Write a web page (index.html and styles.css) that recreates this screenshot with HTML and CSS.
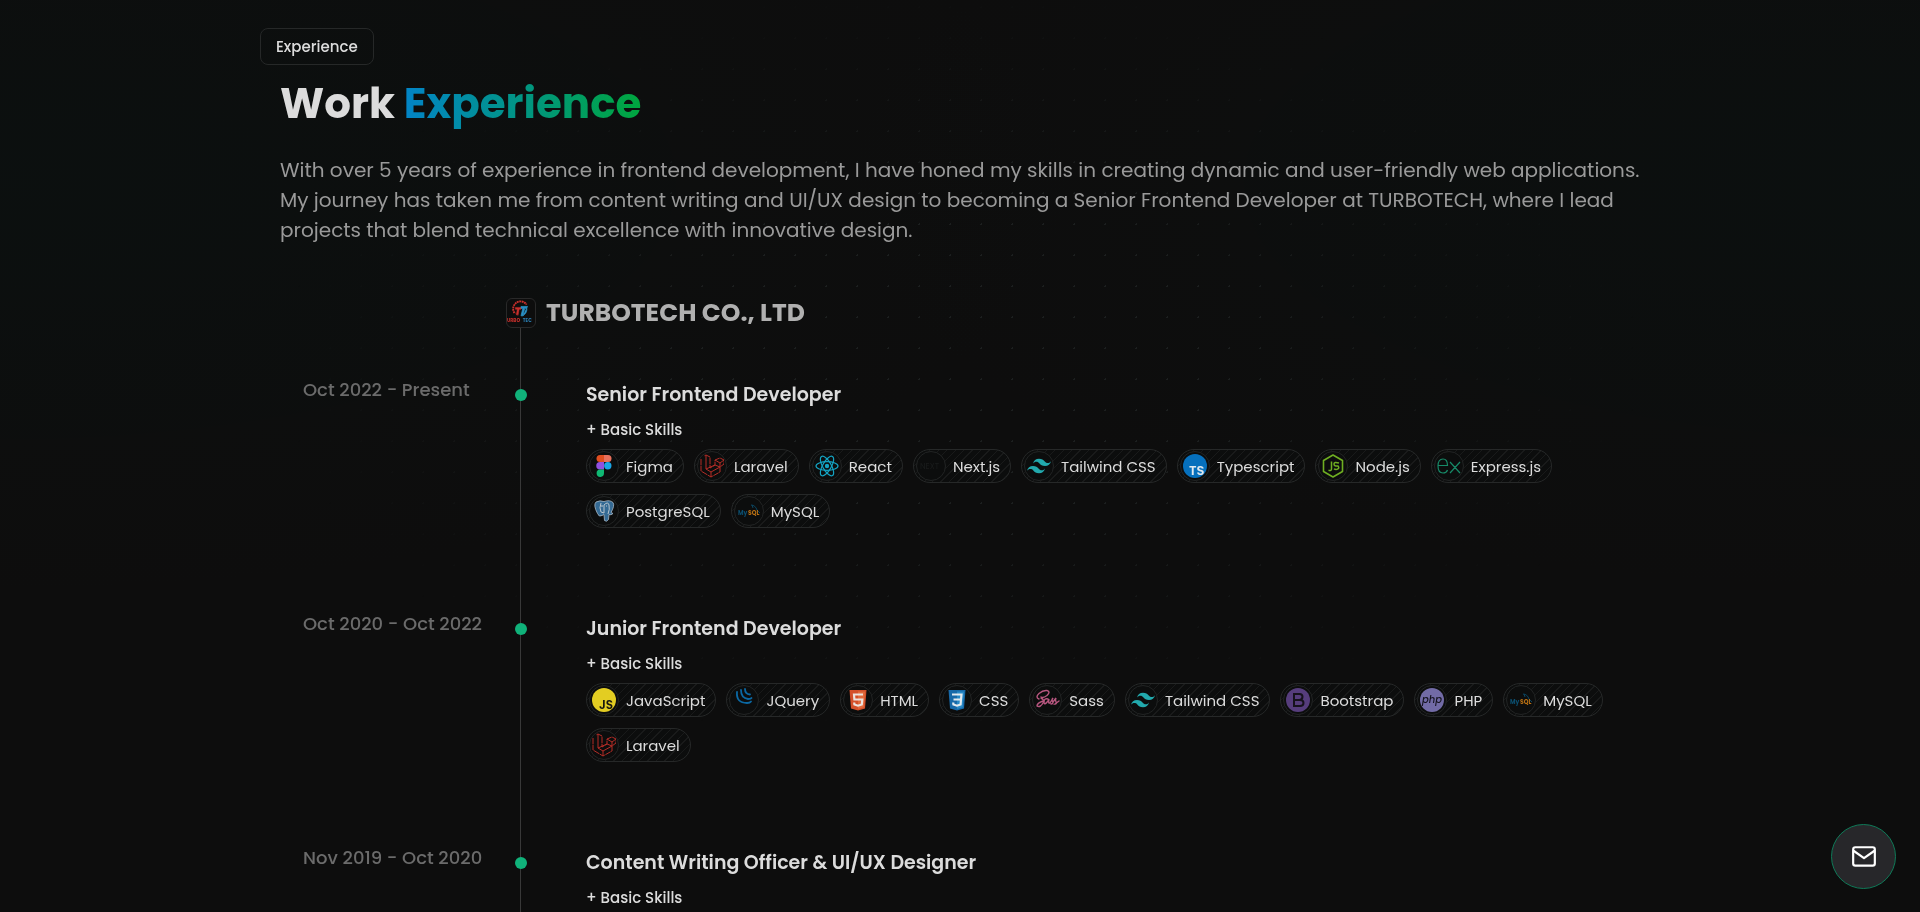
FILE: index.html
```
<!DOCTYPE html>
<html lang="en">

<head>
    <meta charset="UTF-8" />
    <meta name="viewport" content="width=device-width, initial-scale=1" />
    <title>Work Experience</title>
    <link rel="stylesheet" href="styles.css">
</head>

<body>
    <!-- Shared icons, used more than once -->
    <svg class="icon-sprite" aria-hidden="true">
        <symbol id="icon-laravel" viewBox="0 0 24 24">
            <g fill="none" stroke="#b52d27" stroke-width="1" stroke-linejoin="round">
                <path d="M1 5v12l10 6 9-5v-5l4-3V6l-4-2-5 2v5l-5 3V3L6 1 4 2" stroke-dasharray="6 .6" />
                <path d="M6 1v14l5 3 9-5M11 18v5M6 15l9-4 5 2M15 6l5 3 4-3M20 9v4" />
            </g>
        </symbol>
        <symbol id="icon-tailwind" viewBox="0 0 24 24">
            <path fill="#22a9ad" d="M12 4.800c-3.200 0-5.200 1.600-6 4.800 1.200-1.600 2.600-2.200 4.200-1.800.9.2 1.600.9 2.300 1.700C13.700 10.700 15 12 18 12c3.200 0 5.200-1.600 6-4.800-1.200 1.600-2.600 2.200-4.200 1.800-.9-.2-1.600-.9-2.300-1.700C16.300 6.100 15 4.800 12 4.800zM6 12c-3.200 0-5.200 1.600-6 4.800 1.200-1.600 2.600-2.200 4.200-1.800.9.2 1.600.9 2.300 1.700C7.700 17.900 9 19.200 12 19.200c3.200 0 5.200-1.600 6-4.800-1.200 1.600-2.600 2.200-4.200 1.800-.9-.2-1.600-.9-2.300-1.700C10.300 13.300 9 12 6 12z" />
        </symbol>
        <symbol id="icon-mysql" viewBox="0 0 24 24">
            <path d="M14 6c3 0 5 2 6 5l3 3M15 6l1 3" fill="none" stroke="#0b4560" stroke-width="1" />
            <text x="1" y="16" font-size="6" font-weight="700" fill="#0b4f70">My</text>
            <text x="11" y="16" font-size="6" font-weight="700" fill="#b87014">SQL</text>
        </symbol>
    </svg>

    <main class="experience">
        <span class="badge">Experience</span>
        <header class="intro">
            <h1 class="title">Work <span class="title-accent">Experience</span></h1>
            <p class="summary">With over 5 years of experience in frontend development, I have honed my skills in creating dynamic and user-friendly web applications. My journey has taken me from content writing and UI/UX design to becoming a Senior Frontend Developer at TURBOTECH, where I lead projects that blend technical excellence with innovative design.</p>
        </header>

        <section class="timeline">
            <div class="company">
                <svg class="company-logo" viewBox="0 0 30 30" role="img" aria-label="Turbotech">
                    <path d="M8 15a7 7 0 0 1 13-9" fill="none" stroke="#c9302c" stroke-width="2" stroke-dasharray="2 .6" />
                    <path d="M9 9h7l-1 2h-2l-1 6h-2l1-6H9zM8 14l4 4" fill="#c9302c" stroke="#c9302c" stroke-width=".5" />
                    <path d="M15 8h7l-1 2h-2l-2 8h-2l2-8h-2zM21 9c1 4-1 7-4 9" fill="#2a8fc4" stroke="#2a8fc4" stroke-width=".8" />
                    <text x="0" y="25" font-size="5" font-weight="700" fill="#c9302c">URBO</text>
                    <text x="17" y="25" font-size="5" font-weight="700" fill="#2a7fb4">TEC</text>
                </svg>
                <h2 class="company-name">TURBOTECH CO., LTD</h2>
            </div>

            <article class="job">
                <p class="job-date">Oct 2022 - Present</p>
                <span class="job-dot"></span>
                <div class="job-body">
                    <h3 class="job-title">Senior Frontend Developer</h3>
                    <p class="job-skills">+ Basic Skills</p>
                    <ul class="chips">
                        <li class="chip"><span class="chip-icon"><svg viewBox="0 0 24 24">
                                    <path d="M8 1h4v7H8a3.500 3.500 0 0 1 0-7z" fill="#e04e20" />
                                    <path d="M12 1h4a3.500 3.500 0 0 1 0 7h-4z" fill="#e8705c" />
                                    <path d="M8 8h4v7.500H8A3.500 3.500 0 0 1 8 8z" fill="#9050e0" />
                                    <circle cx="15.800" cy="11.700" r="3.700" fill="#1aa5e6" />
                                    <path d="M8 15.500h4V19a3.700 3.700 0 1 1-4-3.500z" fill="#0fb873" />
                                </svg></span>Figma</li>
                        <li class="chip"><span class="chip-icon"><svg><use href="#icon-laravel" /></svg></span>Laravel</li>
                        <li class="chip"><span class="chip-icon"><svg viewBox="0 0 24 24">
                                    <g fill="none" stroke="#14a3c2" stroke-width="1.200">
                                        <ellipse cx="12" cy="12" rx="11" ry="4.300" />
                                        <ellipse cx="12" cy="12" rx="11" ry="4.300" transform="rotate(60 12 12)" />
                                        <ellipse cx="12" cy="12" rx="11" ry="4.300" transform="rotate(120 12 12)" />
                                    </g>
                                    <circle cx="12" cy="12" r="2.200" fill="#14a3c2" />
                                </svg></span>React</li>
                        <li class="chip"><span class="chip-icon"><svg viewBox="0 0 24 24">
                                    <text x="1" y="15" font-size="8" fill="#1a1c1c">NEXT</text>
                                </svg></span>Next.js</li>
                        <li class="chip"><span class="chip-icon"><svg><use href="#icon-tailwind" /></svg></span>Tailwind CSS</li>
                        <li class="chip"><span class="chip-icon"><svg viewBox="0 0 24 24">
                                    <circle cx="12" cy="12" r="12" fill="#0670bd" />
                                    <text x="6" y="21" font-size="13" font-weight="600" fill="#dfe9f0">TS</text>
                                </svg></span>Typescript</li>
                        <li class="chip"><span class="chip-icon"><svg viewBox="0 0 24 24">
                                    <path d="M12 1l9.500 5.500v11L12 23l-9.500-5.500v-11z" fill="none" stroke="#6fae22" stroke-width="1.600" stroke-linejoin="round" />
                                    <path d="M10.500 7.500v7.500q0 2-3 1.300M18 9q-5-1.500-5 1t4 2q2 2.500-1 3.300-2 .3-3-.6" fill="none" stroke="#6fae22" stroke-width="1.500" />
                                </svg></span>Node.js</li>
                        <li class="chip"><span class="chip-icon"><svg viewBox="0 0 24 24">
                                    <path d="M1 11.500h9.500Q10.500 5 6 5 1 5 1 12t5 7q3.500 0 4.500-3M13 8l10 11M23 8l-10 11" fill="none" stroke="#178a68" stroke-width="1.200" />
                                </svg></span>Express.js</li>
                        <li class="chip"><span class="chip-icon"><svg viewBox="0 0 24 24">
                                    <path d="M4 3q4-2 8-.5 6-2 9 1 2 3-2 10l2 1q-2 2-4 1l-.5 5q-2 3-4 1l-.5-6-2 1q-3 2-4.500-2Q1 6 4 3z" fill="#346a94" stroke="#a9b8c4" stroke-width=".8" />
                                    <path d="M9 4q-2 5 0 9l3 1V6q4-4 5 0 1 4-1 9M9 7h2M14 7h1" fill="none" stroke="#b9c5ce" stroke-width="1" />
                                </svg></span>PostgreSQL</li>
                        <li class="chip"><span class="chip-icon"><svg><use href="#icon-mysql" /></svg></span>MySQL</li>
                    </ul>
                </div>
            </article>

            <article class="job">
                <p class="job-date">Oct 2020 - Oct 2022</p>
                <span class="job-dot"></span>
                <div class="job-body">
                    <h3 class="job-title">Junior Frontend Developer</h3>
                    <p class="job-skills">+ Basic Skills</p>
                    <ul class="chips">
                        <li class="chip"><span class="chip-icon"><svg viewBox="0 0 24 24">
                                    <circle cx="12" cy="12" r="12" fill="#e3cd22" />
                                    <text x="7" y="21" font-size="12" font-weight="600" fill="#151510">JS</text>
                                </svg></span>JavaScript</li>
                        <li class="chip"><span class="chip-icon"><svg viewBox="0 0 24 24">
                                    <g fill="none" stroke="#0b68a3" stroke-width="1.800" stroke-linecap="round">
                                        <path d="M5 4q-1 11 10 11 3 0 4-1.500" />
                                        <path d="M9 2q0 8 7 9 3 0 3.500-1" />
                                        <path d="M13 1q0 5 5 5.500" />
                                    </g>
                                </svg></span>JQuery</li>
                        <li class="chip"><span class="chip-icon"><svg viewBox="0 0 24 24">
                                    <path d="M3.500 2h17L19 20.500 12 22.500 5 20.500z" fill="#d4502a" />
                                    <path d="M12 3.500h7l-1.300 15.800L12 21z" fill="#e26a3c" />
                                    <path d="M17 6.500H8l.4 5h7.900l-.5 5-3.800 1.200-3.600-1.200-.2-2" fill="none" stroke="#ece2dd" stroke-width="2.200" />
                                </svg></span>HTML</li>
                        <li class="chip"><span class="chip-icon"><svg viewBox="0 0 24 24">
                                    <path d="M3.500 2h17L19 20.500 12 22.500 5 20.500z" fill="#1769a8" />
                                    <path d="M12 3.500h7l-1.300 15.800L12 21z" fill="#2789c6" />
                                    <path d="M7 6.500h9.500L16 11.500H8.500m7.500 0-.4 5-3.600 1.200-3.600-1.200-.2-2" fill="none" stroke="#e2e9ee" stroke-width="2.200" />
                                </svg></span>CSS</li>
                        <li class="chip"><span class="chip-icon"><svg viewBox="0 0 24 24">
                                    <g fill="none" stroke="#b85780" stroke-width="1.400" stroke-linecap="round">
                                        <path d="M4 11q-4-2 0-5.500Q8 2 12 2.500q4 1 0 5-4 3-6 1.500M6 10q4 2 2 5-3 5-6 3 0-3 6-5" />
                                        <path d="M13 11q-4-1-4 3t4-1l1-2q-1 5 1 4l3-5q-2 2 0 4 0 2-2 2M18 14l3-4q-1 2 0 4t-1 2l4-3" />
                                    </g>
                                </svg></span>Sass</li>
                        <li class="chip"><span class="chip-icon"><svg><use href="#icon-tailwind" /></svg></span>Tailwind CSS</li>
                        <li class="chip"><span class="chip-icon"><svg viewBox="0 0 24 24">
                                    <circle cx="12" cy="12" r="12" fill="#563d7c" />
                                    <path d="M8 6h5.500q3 0 3 2.800T13.500 12H8zM8 12h6q3.500 0 3.500 3T14 18H8z" fill="none" stroke="#16121c" stroke-width="2" />
                                </svg></span>Bootstrap</li>
                        <li class="chip"><span class="chip-icon"><svg viewBox="0 0 24 24">
                                    <circle cx="12" cy="12" r="12" fill="#726ba6" />
                                    <text x="12" y="15" font-size="10" font-style="italic" font-weight="500" text-anchor="middle" fill="#15131f">php</text>
                                </svg></span>PHP</li>
                        <li class="chip"><span class="chip-icon"><svg><use href="#icon-mysql" /></svg></span>MySQL</li>
                        <li class="chip"><span class="chip-icon"><svg><use href="#icon-laravel" /></svg></span>Laravel</li>
                    </ul>
                </div>
            </article>

            <article class="job">
                <p class="job-date">Nov 2019 - Oct 2020</p>
                <span class="job-dot"></span>
                <div class="job-body">
                    <h3 class="job-title">Content Writing Officer &amp; UI/UX Designer</h3>
                    <p class="job-skills">+ Basic Skills</p>
                </div>
            </article>
        </section>
    </main>

    <button class="mail-button" type="button" aria-label="Contact me">
        <svg viewBox="0 0 24 24" fill="none" stroke="#fff" stroke-width="2" stroke-linejoin="round">
            <rect x="2" y="3" width="20" height="17" rx="2" />
            <path d="M2 6l10 7 10-7" />
        </svg>
    </button>
</body>

</html>
```

FILE: styles.css
```
* {
    box-sizing: border-box;
}

body {
    margin: 0;
    min-height: 100vh;
    display: flex;
    flex-direction: column;
    font-family: Poppins, Inter, sans-serif;
    color: #dcdcdc;
    background-color: #0d0d0d;
    background-image:
        radial-gradient(ellipse at 0 20%, rgba(0, 40, 35, 0.1), transparent 40%),
        radial-gradient(ellipse at 100% 20%, rgba(0, 40, 35, 0.1), transparent 40%);
}

/* faint dot grid behind the content */
body::before {
    content: "";
    position: fixed;
    inset: 0;
    z-index: -1;
    background: radial-gradient(circle, #1c1f1f 1px, transparent 1px) 5px -8px / 31px 31px;
    -webkit-mask-image: radial-gradient(ellipse at 50% 40%, #000 20%, transparent 50%);
    mask-image: radial-gradient(ellipse at 50% 40%, #000 20%, transparent 50%);
}

h1,
h2,
h3,
p,
ul {
    margin: 0;
    padding: 0;
}

.icon-sprite {
    display: none;
}

.experience {
    width: 100%;
    max-width: 1400px;
    margin: 0 auto;
    padding-top: 28px;
    flex: 1;
    display: flex;
    flex-direction: column;
    align-items: flex-start;
}

.badge {
    padding: 5px 15px;
    border: 1px solid #262828;
    border-radius: 8px;
    font-size: 15px;
    font-weight: 500;
    line-height: 25px;
}

.intro {
    padding: 11px 20px 0;
}

.title {
    font-size: 42px;
    font-weight: 700;
    line-height: 56px;
}

.title-accent {
    background: linear-gradient(to right, #0284c7, #00a63e);
    background-clip: text;
    -webkit-background-clip: text;
    color: transparent;
}

.summary {
    margin-top: 23px;
    font-size: 20px;
    line-height: 30px;
    color: #9a9a9a;
}

/* Timeline */
.timeline {
    width: 100%;
    margin-top: 53px;
    padding-left: 43px;
    flex: 1;
    background: linear-gradient(#383838, #383838) 260px 30px / 1px 100% no-repeat;
}

.company {
    display: flex;
    align-items: center;
    gap: 10px;
    height: 30px;
    margin-left: 203px;
    margin-bottom: 47px;
}

.company-logo {
    width: 30px;
    height: 30px;
    border: 1px solid #292929;
    border-radius: 6px;
    background: #0d0d0d;
}

.company-name {
    font-size: 25px;
    font-weight: 700;
    line-height: 30px;
    color: #b0b0b0;
}

.job {
    display: grid;
    grid-template-columns: 212px 12px 1fr;
    min-height: 234px;
}

.job:last-child {
    min-height: 0;
}

.job-date {
    font-size: 18px;
    font-weight: 500;
    line-height: 30px;
    color: #6b6b6b;
}

.job-dot {
    width: 12px;
    height: 12px;
    margin-top: 14px;
    border-radius: 50%;
    background: #10b27a;
}

.job-body {
    padding: 5px 16px 0 59px;
}

.job-title {
    font-size: 19px;
    font-weight: 600;
    line-height: 30px;
}

.job-skills {
    margin-top: 8px;
    font-size: 15px;
    font-weight: 500;
    line-height: 24px;
}

.chips {
    display: flex;
    flex-wrap: wrap;
    gap: 11px 10px;
    margin-top: 7px;
    list-style: none;
}

.chip {
    display: flex;
    align-items: center;
    gap: 7px;
    height: 34px;
    padding: 0 10px 0 2px;
    border: 1px solid #262828;
    border-radius: 17px;
    font-size: 15px;
    background: repeating-linear-gradient(135deg, #0c0d0d 0 5px, #191a1a 5px 6px);
}

.chip-icon {
    display: grid;
    place-items: center;
    width: 30px;
    height: 30px;
    border: 1px solid #222424;
    border-radius: 50%;
    background: #0c0d0d;
}

.chip-icon svg {
    width: 24px;
    height: 24px;
    overflow: visible;
}

.mail-button {
    position: fixed;
    right: 24px;
    bottom: 23px;
    display: grid;
    place-items: center;
    width: 65px;
    height: 65px;
    padding: 0;
    border: 1px solid #0f7a58;
    border-radius: 50%;
    background: #27272a;
    cursor: pointer;
}

.mail-button svg {
    width: 26px;
    height: 26px;
}
```
